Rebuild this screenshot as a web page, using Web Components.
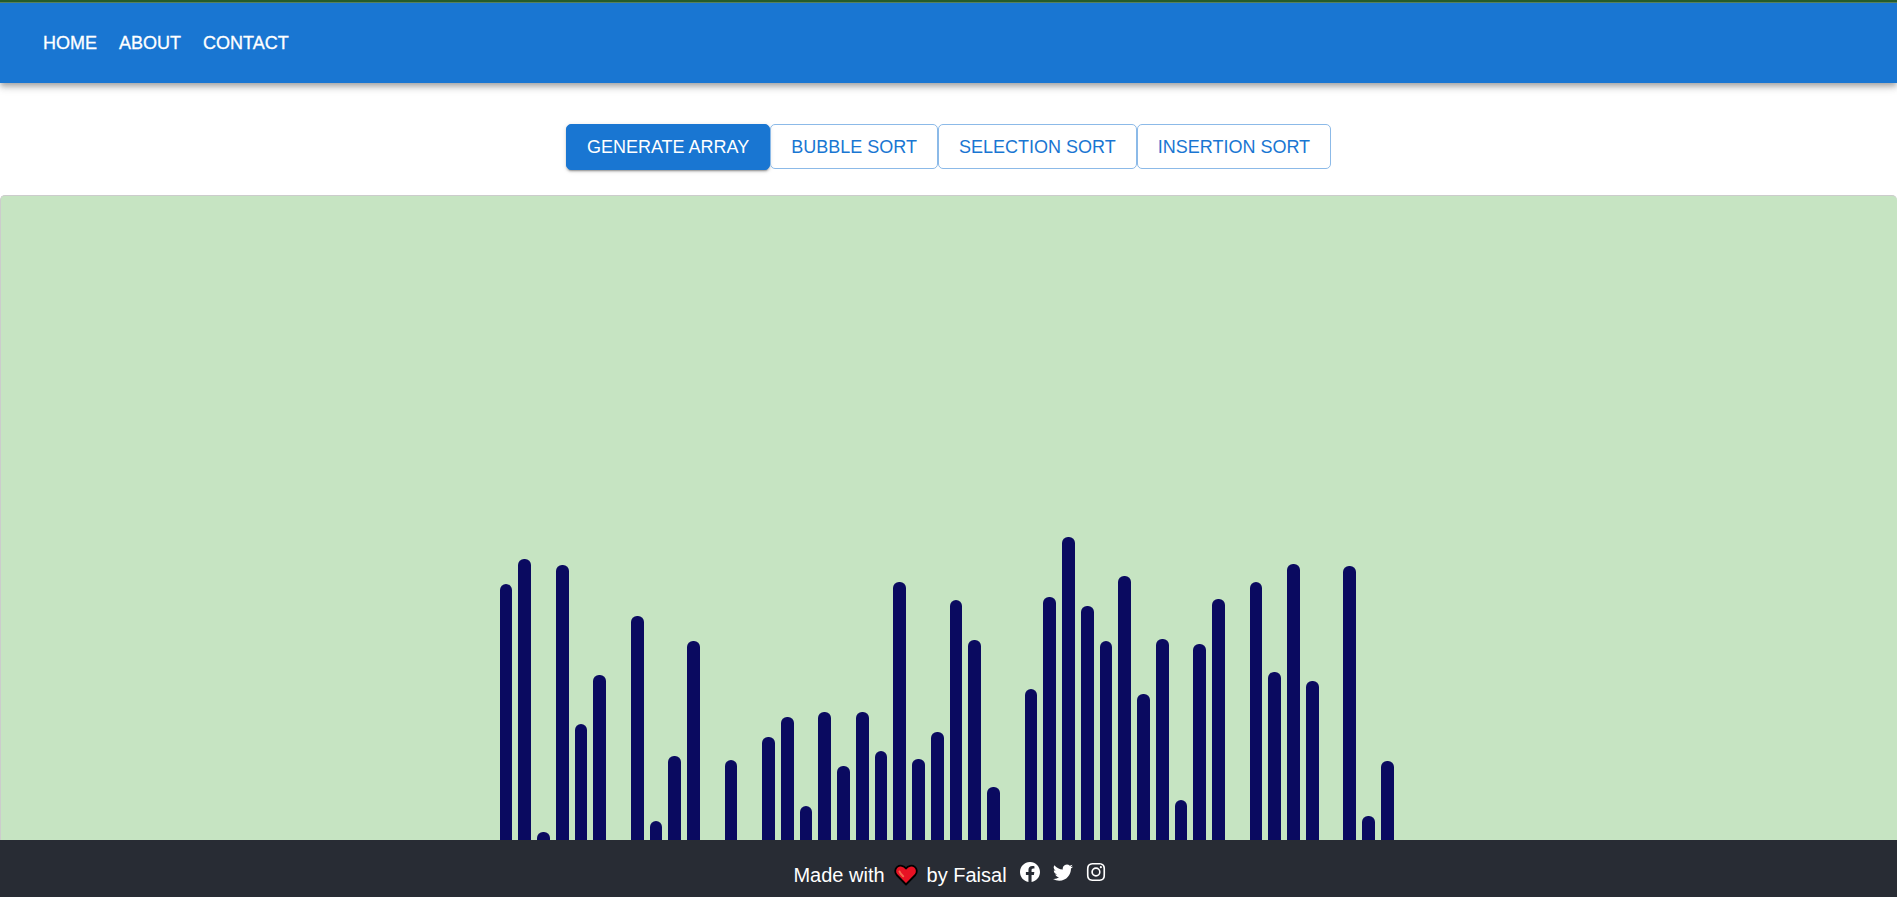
<!DOCTYPE html>
<html lang="en">
<head>
<meta charset="utf-8">
<title>Sorting Visualizer</title>
<style>
body { margin: 0; font-family: "Liberation Sans", Arial, sans-serif; background: #fff; }
</style>
</head>
<body>
<sort-app></sort-app>
<script>
const define = (name, html) => {
  const t = document.createElement('template');
  t.innerHTML = html;
  customElements.define(name, class extends HTMLElement {
    constructor() {
      super();
      this.attachShadow({ mode: 'open' }).append(t.content.cloneNode(true));
    }
  });
};

define('nav-link', `
<style>
:host { display: block; }
a { color: #fff; text-decoration: none; font-size: 18px; line-height: 24px; display: block; -webkit-text-stroke: .3px #fff; }
</style>
<a href="#"><slot></slot></a>`);

define('nav-bar', `
<style>
:host { display: block; position: relative; background: #1976d2; border-top: 2px solid #255c2b; box-sizing: border-box;
  box-shadow: inset 0 1px #56805c, 0 3px 5px -1px rgba(0,0,0,.2), 0 5px 6px 0 rgba(0,0,0,.14), 0 1px 13px 0 rgba(0,0,0,.12); }
nav { display: flex; align-items: center; gap: 22px; min-height: 81px; padding: 1px 43px 0; box-sizing: border-box; }
</style>
<nav><slot></slot></nav>`);

define('sort-button', `
<style>
:host { display: block; }
button { font: inherit; font-size: 18px; line-height: 31px; display: block; padding: 7px 20px 5px; border: 1px solid #8cbae8;
  border-radius: 5px; background: transparent; color: #1976d2; cursor: pointer; white-space: nowrap; }
:host([primary]) button { background: #1976d2; border-color: #1976d2; color: #fff; padding-bottom: 6px;
  box-shadow: 0 3px 1px -2px rgba(0,0,0,.2), 0 2px 2px 0 rgba(0,0,0,.14), 0 1px 5px 0 rgba(0,0,0,.12); }
</style>
<button type="button"><slot></slot></button>`);

define('sort-controls', `
<style>
:host { display: flex; flex-wrap: wrap; justify-content: center; align-items: flex-start; padding: 41px 0 25px; }
</style>
<slot></slot>`);

class BarChart extends HTMLElement {
  constructor() {
    super();
    this.attachShadow({ mode: 'open' }).innerHTML = `
<style>
:host { display: flex; justify-content: center; align-items: flex-end; box-sizing: border-box;
  background: #c6e4c2; border: 1px solid #ccc; border-width: 1px 0 0 1px; border-radius: 5px 5px 0 0; }
.bars { display: grid; grid-template-columns: repeat(48, 1fr); align-items: end; width: 100%; max-width: 905px;
  box-sizing: border-box; padding: 0 2px 0 3px; }
.bar { margin-right: 6px; background: #0a0a60; border-radius: 6px 6px 0 0; }
</style>
<div class="bars"></div>`;
  }
  connectedCallback() {
    const box = this.shadowRoot.querySelector('.bars');
    this.getAttribute('values').split(' ').forEach(v => {
      const bar = document.createElement('div');
      bar.className = 'bar';
      bar.style.height = v + 'px';
      box.append(bar);
    });
  }
}
customElements.define('bar-chart', BarChart);

define('social-link', `
<style>
:host { display: block; }
a { display: block; color: #fff; }
::slotted(svg) { display: block; width: 20px; height: 20px; fill: currentColor; }
</style>
<a href="#"><slot></slot></a>`);

define('page-footer', `
<style>
:host { display: block; background: #282c34; color: #fff; }
footer { display: flex; justify-content: center; align-items: center; min-height: 57px; box-sizing: border-box; padding: 7px 0 0 2px; font-size: 20px; line-height: 24px; }
p { margin: 0 13px 0 0; display: flex; align-items: center; gap: 9px; padding-top: 6px; }
.heart { width: 24px; height: 22px; }
.social { display: flex; gap: 13px; }
</style>
<footer>
<p><span>Made with</span>
<svg class="heart" viewBox="0 0 24 22" role="img" aria-label="love"><path d="M12 20.500 2.700 11C.5 8.500.8 4.800 3.200 2.900 6 .8 9.800 1.500 12 4.600 14.200 1.500 18 .8 20.800 2.900c2.400 1.900 2.700 5.600.5 8.100z" fill="#e81224" stroke="#000" stroke-width="1.800" stroke-linejoin="round"/><path d="M5.500 7.500c.5 1.800 1.800 3 3.700 4.800" fill="none" stroke="#f4694e" stroke-width="2" stroke-linecap="round"/></svg>
<span>by Faisal</span></p>
<div class="social">
<social-link><svg viewBox="0 0 16 16" role="img" aria-label="Facebook"><path d="M16 8.049c0-4.446-3.582-8.050-8-8.050C3.580 0-.002 3.603-.002 8.050c0 4.017 2.926 7.347 6.750 7.951v-5.625h-2.030V8.050H6.750V6.275c0-2.017 1.195-3.131 3.022-3.131.876 0 1.791.157 1.791.157v1.980h-1.009c-.993 0-1.303.621-1.303 1.258v1.510h2.218l-.354 2.326H9.250V16c3.824-.604 6.750-3.934 6.750-7.951z"/></svg></social-link>
<social-link><svg viewBox="0 0 16 16" role="img" aria-label="Twitter"><path d="M5.026 15c6.038 0 9.341-5.003 9.341-9.334 0-.140 0-.282-.006-.422A6.685 6.685 0 0 0 16 3.542a6.658 6.658 0 0 1-1.889.518 3.301 3.301 0 0 0 1.447-1.817 6.533 6.533 0 0 1-2.087.793A3.286 3.286 0 0 0 7.875 6.030a9.325 9.325 0 0 1-6.767-3.429 3.289 3.289 0 0 0 1.018 4.382A3.323 3.323 0 0 1 .640 6.575v.045a3.288 3.288 0 0 0 2.632 3.218 3.203 3.203 0 0 1-.865.115 3.230 3.230 0 0 1-.614-.057 3.283 3.283 0 0 0 3.067 2.277A6.588 6.588 0 0 1 .780 13.580a6.320 6.320 0 0 1-.780-.045A9.344 9.344 0 0 0 5.026 15z"/></svg></social-link>
<social-link><svg viewBox="-0.800 -0.800 17.600 17.600" role="img" aria-label="Instagram"><path d="M8 0C5.829 0 5.556.010 4.703.048 3.850.088 3.269.222 2.760.420a3.917 3.917 0 0 0-1.417.923A3.927 3.927 0 0 0 .420 2.760C.222 3.268.087 3.850.048 4.700.010 5.555 0 5.827 0 8.001c0 2.172.010 2.444.048 3.297.040.852.174 1.433.372 1.942.205.526.478.972.923 1.417.444.445.890.719 1.416.923.510.198 1.090.333 1.942.372C5.555 15.990 5.827 16 8 16s2.444-.010 3.298-.048c.851-.040 1.434-.174 1.943-.372a3.916 3.916 0 0 0 1.416-.923c.445-.445.718-.891.923-1.417.197-.509.332-1.090.372-1.942C15.990 10.445 16 10.173 16 8s-.010-2.445-.048-3.299c-.040-.851-.175-1.433-.372-1.941a3.926 3.926 0 0 0-.923-1.417A3.911 3.911 0 0 0 13.240.420c-.510-.198-1.092-.333-1.943-.372C10.443.010 10.172 0 7.998 0zm-.717 1.442h.718c2.136 0 2.389.007 3.232.046.780.035 1.204.166 1.486.275.373.145.640.319.920.599.280.280.453.546.598.920.110.281.240.705.275 1.485.039.843.047 1.096.047 3.231s-.008 2.389-.047 3.232c-.035.780-.166 1.203-.275 1.485a2.470 2.470 0 0 1-.599.919c-.280.280-.546.453-.920.598-.280.110-.704.240-1.485.276-.843.038-1.096.047-3.232.047s-2.390-.009-3.233-.047c-.780-.036-1.203-.166-1.485-.276a2.478 2.478 0 0 1-.920-.598 2.480 2.480 0 0 1-.600-.920c-.109-.281-.240-.705-.275-1.485-.038-.843-.046-1.096-.046-3.233 0-2.136.008-2.388.046-3.231.036-.780.166-1.204.276-1.486.145-.373.319-.640.599-.920.280-.280.546-.453.920-.598.282-.110.705-.240 1.485-.276.738-.034 1.024-.044 2.515-.045zm4.988 1.328a.960.960 0 1 0 0 1.920.960.960 0 0 0 0-1.920zm-4.270 1.122a4.109 4.109 0 1 0 0 8.217 4.109 4.109 0 0 0 0-8.217zm0 1.441a2.667 2.667 0 1 1 0 5.334 2.667 2.667 0 0 1 0-5.334z"/></svg></social-link>
</div>
</footer>`);

define('sort-app', `
<style>
:host { display: flex; flex-direction: column; min-height: 100vh; }
bar-chart { flex: 1; }
</style>
<nav-bar><nav-link>HOME</nav-link><nav-link>ABOUT</nav-link><nav-link>CONTACT</nav-link></nav-bar>
<sort-controls>
<sort-button primary>GENERATE ARRAY</sort-button><sort-button>BUBBLE SORT</sort-button><sort-button>SELECTION SORT</sort-button><sort-button>INSERTION SORT</sort-button>
</sort-controls>
<bar-chart values="256 281 8 275 116 165 0 224 19 84 199 0 80 0 103 123 34 128 74 128 89 258 81 108 240 200 53 0 151 243 303 234 199 264 146 201 40 196 241 0 258 168 276 159 0 274 24 79"></bar-chart>
<page-footer></page-footer>`);
</script>
</body>
</html>
